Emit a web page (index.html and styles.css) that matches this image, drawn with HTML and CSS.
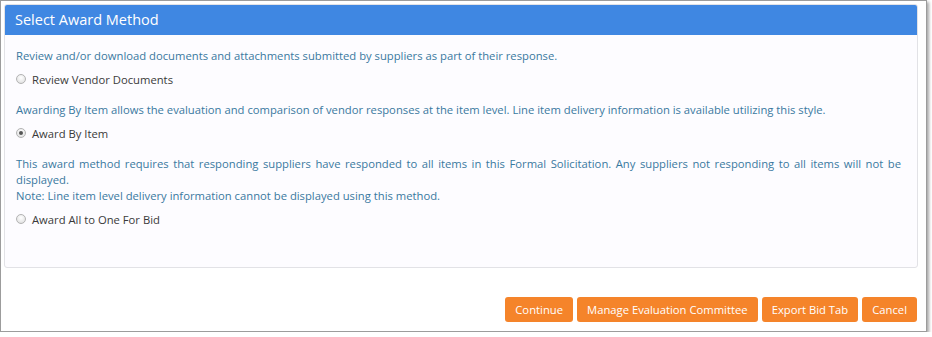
FILE: index.html
```html
<!DOCTYPE html>
<html>
<head>
<meta charset="utf-8">
<link rel="stylesheet" href="styles.css">
</head>
<body>
<div class="frame">
  <div class="panel">
    <div class="panel-header">Select Award Method</div>
    <div class="panel-body">
      <div class="option">
        <p class="desc">Review and/or download documents and attachments submitted by suppliers as part of their response.</p>
        <label class="radio-row"><input type="radio" name="m" class="radio"><span>Review Vendor Documents</span></label>
      </div>
      <div class="option">
        <p class="desc">Awarding By Item allows the evaluation and comparison of vendor responses at the item level. Line item delivery information is available utilizing this style.</p>
        <label class="radio-row"><input type="radio" name="m" class="radio" checked><span>Award By Item</span></label>
      </div>
      <div class="option">
        <p class="desc">This award method requires that responding suppliers have responded to all items in this Formal Solicitation. Any suppliers not responding to all items will not be displayed.<br>Note: Line item level delivery information cannot be displayed using this method.</p>
        <label class="radio-row"><input type="radio" name="m" class="radio"><span>Award All to One For Bid</span></label>
      </div>
    </div>
  </div>
  <div class="actions">
    <button class="btn">Continue</button>
    <button class="btn">Manage Evaluation Committee</button>
    <button class="btn">Export Bid Tab</button>
    <button class="btn">Cancel</button>
  </div>
</div>
</body>
</html>
```
FILE: styles.css
```css
html, body {
  margin: 0;
  padding: 0;
  background: #ffffff;
}
body {
  font-family: "Open Sans", "Liberation Sans", sans-serif;
  font-size: 11.25px;
}
.frame {
  box-sizing: border-box;
  width: 927px;
  height: 332px;
  border: 1px solid #9c9c9c;
  box-shadow: 2px 2px 3px rgba(0, 0, 0, 0.35);
  padding: 3px 9px 0 3px;
  background: #ffffff;
}
.panel {
  box-sizing: border-box;
  width: 914px;
  height: 264px;
  border: 1px solid #e2e2e6;
  border-radius: 3px;
  background: #fdfcff;
  overflow: hidden;
}
.panel-header {
  height: 31px;
  background: #3f87e2;
  color: #ffffff;
  font-size: 14.5px;
  line-height: 31px;
  padding-left: 11px;
  margin: -1px -1px 0 -1px;
}
.panel-body {
  padding: 13px 16px 0 11px;
  display: flex;
  flex-direction: column;
  gap: 15px;
}
.option {
  display: flex;
  flex-direction: column;
  gap: 7px;
}
.desc {
  margin: 0;
  color: #3a79a0;
  line-height: 16px;
  text-align: justify;
}
.radio-row {
  display: flex;
  align-items: center;
  height: 16px;
  color: #3a3a3a;
  gap: 6px;
}
.radio {
  appearance: none;
  -webkit-appearance: none;
  margin: 0;
  width: 10px;
  height: 10px;
  border-radius: 50%;
  border: 1px solid #b3b3b3;
  background: radial-gradient(circle at 50% 35%, #ffffff 0%, #e6e6e6 70%, #d4d4d4 100%);
  position: relative;
  box-sizing: border-box;
}
.radio:checked::after {
  content: "";
  position: absolute;
  left: 2px;
  top: 2px;
  width: 4px;
  height: 4px;
  border-radius: 50%;
  background: #555555;
}
.actions {
  display: flex;
  justify-content: flex-end;
  gap: 4px;
  margin-top: 29px;
}
.btn {
  font-family: "Open Sans", "Liberation Sans", sans-serif;
  font-size: 11.25px;
  color: #ffffff;
  background: #f5842a;
  border: none;
  border-radius: 3px;
  height: 25px;
  padding: 0 10px;
  line-height: 25px;
}
```
